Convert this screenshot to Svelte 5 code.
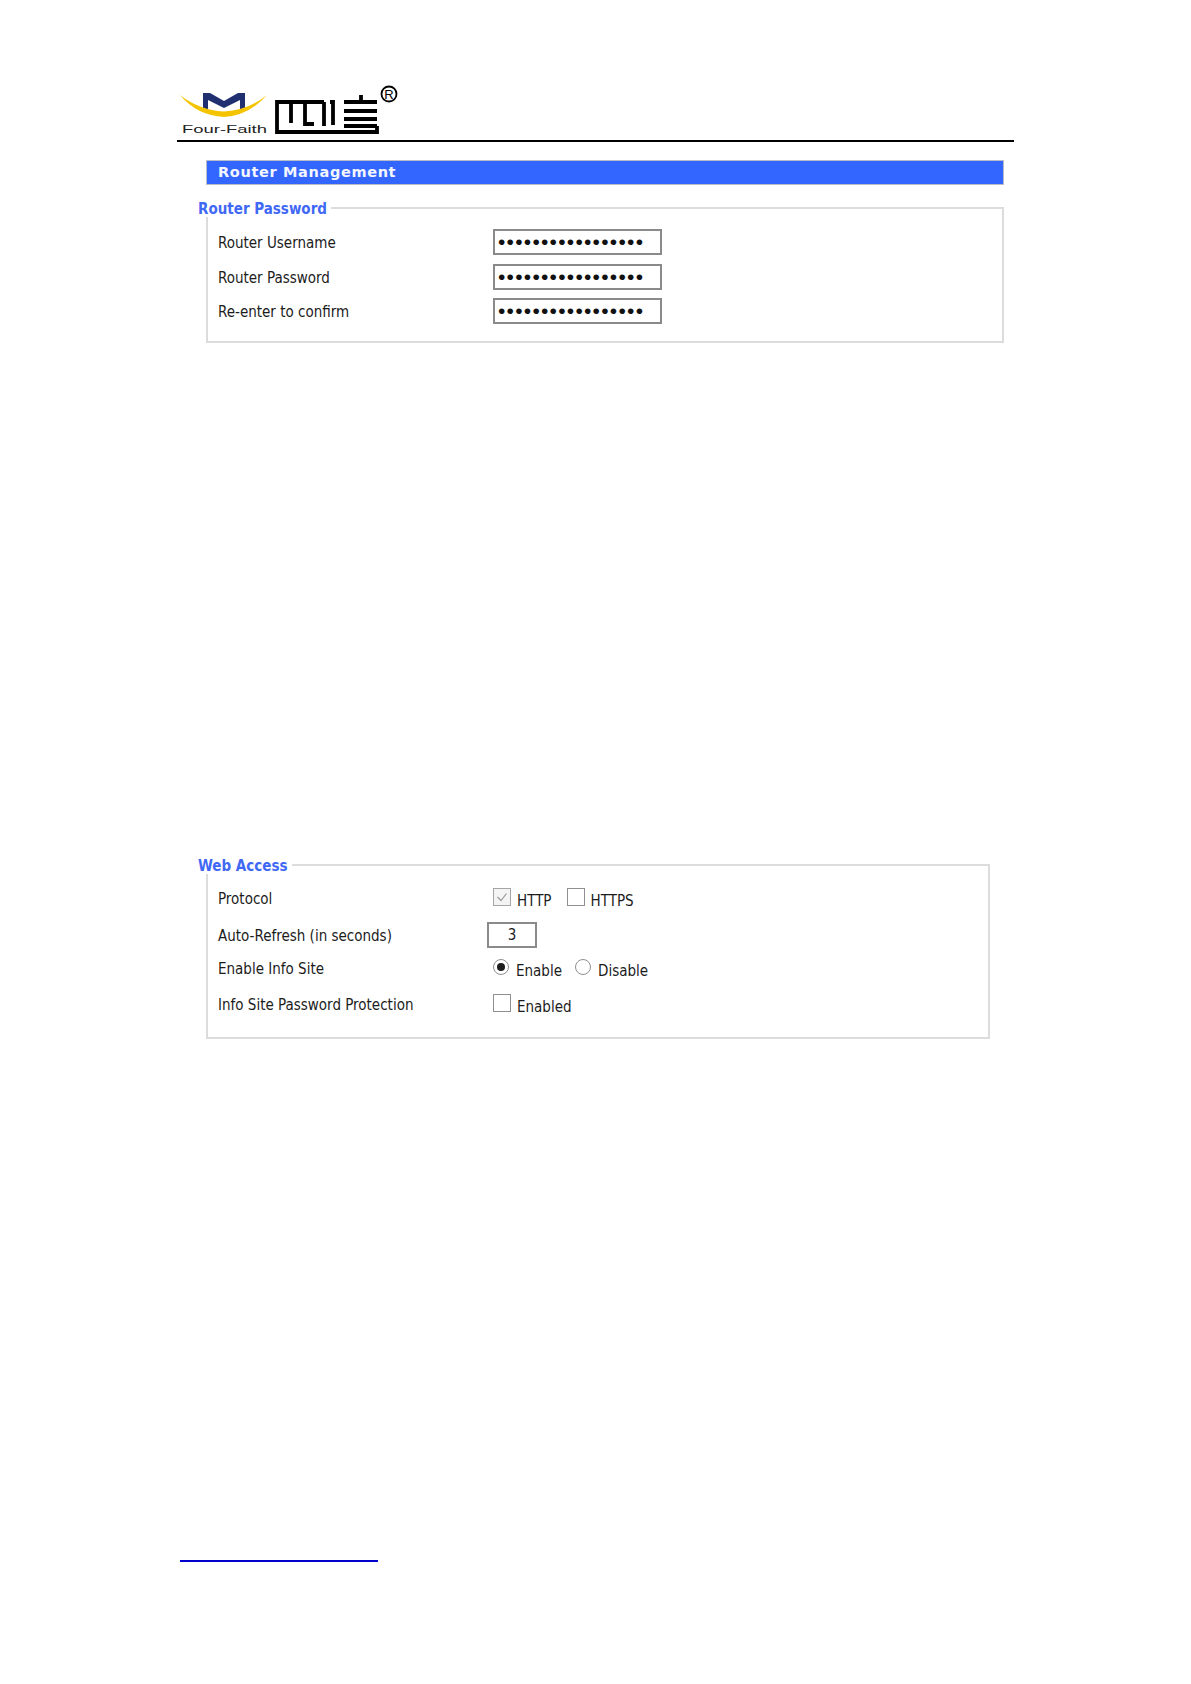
<script>
  const pw = [
    { label: 'Router Username' },
    { label: 'Router Password' },
    { label: 'Re-enter to confirm' }
  ];
  const dots = '•'.repeat(17);
</script>

<div class="page">
  <header class="head">
    <svg class="logo" width="226" height="64" viewBox="0 0 226 64">
      <path d="M26 34 V17 H33 L47 25 L61 17 H68 V34 H63 V24 L47 32 L31 24 V34Z" fill="#1f2f70"/>
      <path d="M3 19 Q22 34 47 35.5 Q72 34 90 19 Q72 39.5 47 41 Q20 39.5 3 19Z" fill="#f5c400"/>
      <text x="5" y="57" class="ff" textLength="85" lengthAdjust="spacingAndGlyphs">Four-Faith</text>
      <g fill="none" stroke="#000" stroke-width="3.8">
        <path d="M147 26 H100 V56 H200 V50"/>
        <path d="M114 26 V47 M128 26 V48 H137 M147 26 V50"/>
        <path d="M153 26 H156 V49"/>
        <path d="M167 26 H200 M184 19 V26 M167 35 H200 M167 43 H200 M167 50 H200"/>
      </g>
      <circle cx="212" cy="18" r="7.5" fill="none" stroke="#000" stroke-width="1.8"/>
      <text x="212" y="22.7" class="reg">R</text>
    </svg>
  </header>

  <h2 class="banner">Router Management</h2>

  <fieldset class="box first">
    <legend>Router Password</legend>
    {#each pw as row}
      <div class="row pw">
        <span class="label">{row.label}</span>
        <span class="pwbox">{dots}</span>
      </div>
    {/each}
  </fieldset>

  <fieldset class="box second">
    <legend>Web Access</legend>
    <div class="row r1">
      <span class="label">Protocol</span>
      <span class="ctl">
        <span class="check on"><svg width="16" height="16" viewBox="0 0 16 16"><path d="M3.5 8 L7 11.5 L12.5 4.5" fill="none" stroke="#9a9a9a" stroke-width="1.2"/></svg></span>
        <span class="opt">HTTP</span>
        <span class="check sp"></span>
        <span class="opt">HTTPS</span>
      </span>
    </div>
    <div class="row r2">
      <span class="label">Auto-Refresh (in seconds)</span>
      <span class="num">3</span>
    </div>
    <div class="row r3">
      <span class="label">Enable Info Site</span>
      <span class="ctl">
        <span class="radio on"></span>
        <span class="opt">Enable</span>
        <span class="radio sp"></span>
        <span class="opt">Disable</span>
      </span>
    </div>
    <div class="row r4">
      <span class="label">Info Site Password Protection</span>
      <span class="ctl">
        <span class="check"></span>
        <span class="opt">Enabled</span>
      </span>
    </div>
  </fieldset>

  <div class="foot"></div>
</div>

<style>
  :global(body) { margin: 0; background: #fff; }
  .page {
    width: 1191px;
    height: 1684px;
    box-sizing: border-box;
    padding: 76px 177px 0 177px;
    font-family: "DejaVu Sans", sans-serif;
    font-stretch: condensed;
    font-size: 15px;
    color: #1c1c1c;
    position: relative;
    overflow: hidden;
  }
  .head {
    height: 64px;
    border-bottom: 2px solid #000;
  }
  .logo { display: block; }
  .ff { font-family: "Liberation Sans", sans-serif; font-size: 11px; fill: #222; }
  .reg { font-family: "Liberation Sans", sans-serif; font-size: 13px; text-anchor: middle; fill: #000; }
  .banner {
    margin: 18px 10px 0 29px;
    height: 25px;
    box-sizing: border-box;
    background: #3366ff;
    border: 1px solid #b9bdc9;
    color: #f4f6ff;
    font-family: "DejaVu Sans", sans-serif;
    font-stretch: normal;
    font-size: 14.5px;
    font-weight: 700;
    letter-spacing: 0.65px;
    line-height: 23px;
    padding-left: 11px;
  }
  .box {
    border: 2px solid #dcdcdc;
    margin: 0;
    padding: 0;
    box-sizing: border-box;
    position: relative;
  }
  legend {
    padding: 0 4px 0 0;
    margin-left: -10px;
    color: #3f68f5;
    font-weight: 700;
    font-size: 15px;
    line-height: 18px;
    position: relative;
    top: 1px;
  }
  .first { margin: 14px 10px 0 29px; height: 144px; padding-top: 12px; }
  .second { margin: 513px 24px 0 29px; height: 183px; padding-top: 13px; }
  .row { display: flex; align-items: center; padding-left: 10px; }
  .label { width: 275px; flex: none; position: relative; top: 1px; }
  .r1 .label { top: 0; }
  .pw { height: 26px; margin-bottom: 8.5px; }
  .pwbox {
    width: 169px;
    height: 26px;
    box-sizing: border-box;
    border: 2px solid #8a8a8a;
    font-family: "Liberation Sans", sans-serif;
    font-stretch: normal;
    font-size: 21px;
    letter-spacing: 1.25px;
    line-height: 21px;
    padding-left: 3px;
    color: #111;
    overflow: hidden;
    white-space: nowrap;
  }
  .ctl { display: flex; align-items: center; }
  .check {
    width: 16px;
    height: 16px;
    border: 1px solid #8f8f8f;
    display: block;
    flex: none;
    position: relative;
    top: -2px;
  }
  .check.on { background: #f4f4f4; border-color: #a5a5a5; }
  .check svg { display: block; }
  .opt { margin-left: 6px; position: relative; top: 2px; }
  .r3 .opt { margin-left: 7px; }
  .r3 .ctl, .r4 .ctl { position: relative; top: 1px; }
  .sp { margin-left: 15px; }
  .r3 .sp { margin-left: 13px; }
  .radio {
    width: 16px;
    height: 16px;
    box-sizing: border-box;
    border: 1px solid #8f8f8f;
    border-radius: 50%;
    display: block;
    position: relative;
    top: -2px;
    flex: none;
  }
  .radio.on::after {
    content: '';
    position: absolute;
    inset: 3px;
    border-radius: 50%;
    background: #1c1c1c;
  }
  .r1 { height: 24px; }
  .r2 { height: 26px; margin-top: 11px; }
  .r3 { height: 24px; margin-top: 8px; }
  .r4 { height: 24px; margin-top: 12px; }
  .num {
    width: 50px;
    height: 26px;
    margin-left: -6px;
    box-sizing: border-box;
    border: 2px solid #8a8a8a;
    text-align: center;
    line-height: 22px;
  }
  .foot {
    position: absolute;
    left: 180px;
    top: 1560px;
    width: 198px;
    height: 2px;
    background: #0000cc;
  }
</style>
